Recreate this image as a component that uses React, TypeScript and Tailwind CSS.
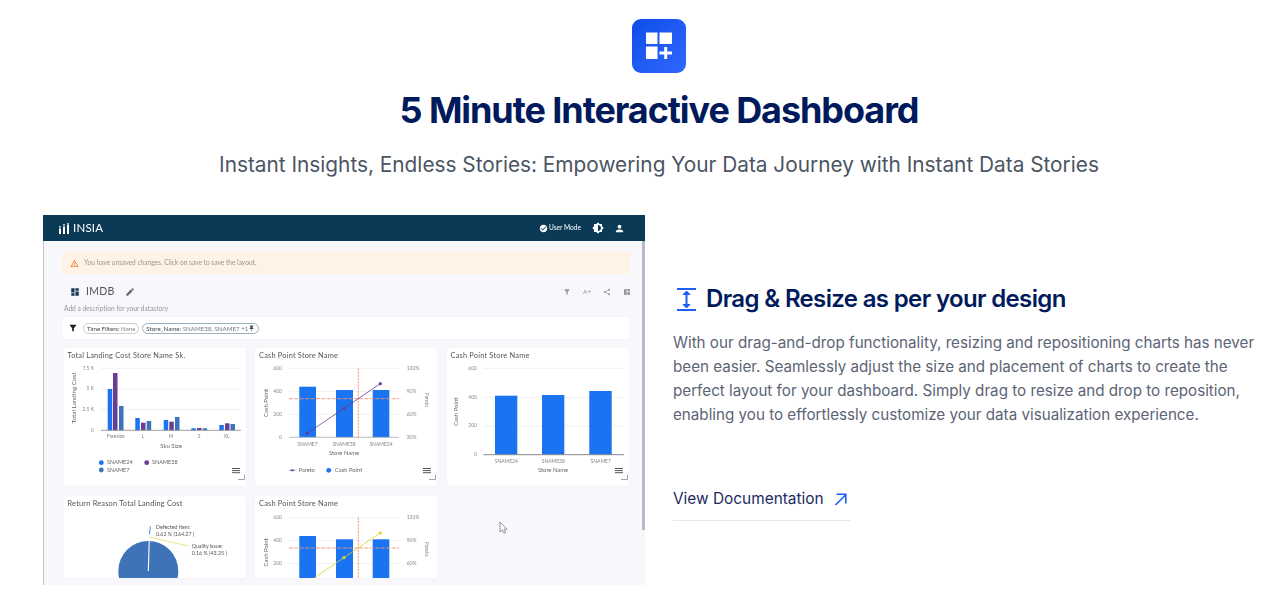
import type { ReactNode } from "react";
import { MdBrightnessMedium, MdCheckCircle, MdDashboard, MdEdit, MdFilterAlt, MdPerson, MdPushPin, MdShare, MdSpaceDashboard, MdWarningAmber } from "react-icons/md";

const BLUE = "#1a73f0";
const PURPLE = "#6a3d94";
const STEEL = "#3f73b8";

function Corner({ x = 174 }: { x?: number }) {
  return (
    <g>
      <path d={`M${x} 131.5H${x + 6.5}V126.5`} fill="none" stroke="#9a9a9a" strokeWidth="0.9" />
      <path d={`M${x - 6} 120.5h8M${x - 6} 122.6h8M${x - 6} 124.7h8`} stroke="#444" strokeWidth="0.9" />
    </g>
  );
}

function T({ x, y, children, a = "middle", s = 5, f = "#888", w = 400, r }: { x: number; y: number; children: ReactNode; a?: "start" | "middle" | "end"; s?: number; f?: string; w?: number; r?: number }) {
  return (
    <text x={x} y={y} textAnchor={a} fontSize={s} fill={f} fontWeight={w} dominantBaseline="middle" transform={r !== undefined ? `rotate(${r} ${x} ${y})` : undefined}>
      {children}
    </text>
  );
}

function Card({ title, tall, children }: { title: string; tall?: boolean; children: ReactNode }) {
  return (
    <div className={`bg-white rounded-[2px] overflow-hidden shadow-[0_0_3px_rgba(0,0,0,0.04)] ${tall ? "h-[138px]" : "h-[82px]"}`}>
      <div className="h-[16px] pl-[4px] pt-[3px] text-[7.4px] leading-[10px] text-[#555] tracking-[0.2px] whitespace-nowrap">{title}</div>
      <svg width="182" height={tall ? 122 : 66} viewBox={tall ? "0 16 182 122" : "0 16 182 66"} className="block">
        {children}
      </svg>
    </div>
  );
}

function Bars() {
  const groups: [number, number, string][][] = [
    [[43.7, 41, BLUE], [49, 25, PURPLE], [55, 58, STEEL]],
    [[71.3, 70, BLUE], [77, 74.7, PURPLE], [82.7, 73, STEEL]],
    [[99.7, 72, BLUE], [105.3, 73.7, PURPLE], [111, 69, STEEL]],
    [[127.3, 80.3, BLUE], [133, 80, PURPLE], [138.7, 80.3, STEEL]],
    [[155.3, 77, BLUE], [161, 75.3, PURPLE], [166.5, 76, STEEL]],
  ];
  return (
    <g>
      {[20.3, 41, 61.3].map((y) => (
        <line key={y} x1="37" x2="177" y1={y} y2={y} stroke="#ececec" strokeWidth="0.8" />
      ))}
      {groups.flat().map(([x, y, c]) => (
        <rect key={`${x}`} x={x} y={y} width="4.5" height={82.3 - y} fill={c} />
      ))}
      <line x1="37" x2="177" y1="82.3" y2="82.3" stroke="#888" strokeWidth="0.8" />
      <T x={30} y={20.3} a="end">7.5 K</T>
      <T x={30} y={41} a="end">5 K</T>
      <T x={30} y={61.3} a="end">2.5 K</T>
      <T x={30} y={82.3} a="end">0</T>
      <T x={51.7} y={89}>Freesize</T>
      <T x={79} y={89}>L</T>
      <T x={107} y={89}>M</T>
      <T x={135} y={89}>S</T>
      <T x={162.7} y={89}>XL</T>
      <T x={107} y={98.5} s={6} f="#666">Sku Size</T>
      <T x={10.3} y={50} s={6.3} f="#666" r={-90}>Total Landing Cost</T>
      <circle cx="37.3" cy="114.7" r="2.4" fill={BLUE} />
      <T x={43} y={115} a="start" s={5.5} f="#666">SNAME24</T>
      <circle cx="82.7" cy="114.7" r="2.4" fill={PURPLE} />
      <T x={88} y={115} a="start" s={5.5} f="#666">SNAME38</T>
      <circle cx="37.3" cy="122" r="2.4" fill={STEEL} />
      <T x={43} y={122.3} a="start" s={5.5} f="#666">SNAME7</T>
      <Corner />
    </g>
  );
}

function Pareto({ line, dy = 0, cut }: { line: string; dy?: number; cut?: boolean }) {
  const p: [number, number][] = [[52.3, 85.3 + dy], [89, 60.3 + dy], [125.3, 35.7 + dy]];
  return (
    <g>
      {[20.3, 43.3, 66.3].map((y) => (
        <line key={y} x1="34" x2="144" y1={y + dy} y2={y + dy} stroke="#ececec" strokeWidth="0.8" />
      ))}
      <rect x="44.3" y={38.7 + dy} width="16.7" height={50.6} fill={BLUE} />
      <rect x="81" y={42 + dy} width="17" height={47.3} fill={BLUE} />
      <rect x="117.7" y={42 + dy} width="16.6" height={47.3} fill={BLUE} />
      <line x1="34" x2="144" y1={89.3 + dy} y2={89.3 + dy} stroke="#aaa" strokeWidth="0.8" />
      <line x1="34" x2="144" y1={50.7 + dy} y2={50.7 + dy} stroke="#f2937a" strokeWidth="0.9" strokeDasharray="4 1.4" />
      <line x1="103.3" x2="103.3" y1={20.3 + dy} y2={89.3 + dy} stroke="#f2734f" strokeWidth="0.7" strokeDasharray="2.4 0.8" />
      <polyline points={p.map((q) => q.join(",")).join(" ")} fill="none" stroke={line} strokeWidth="0.8" />
      {p.map(([x, y]) => (
        <circle key={x} cx={x} cy={y} r="1.6" fill={line} />
      ))}
      <T x={27} y={20.3 + dy} a="end">600</T>
      <T x={27} y={43.3 + dy} a="end">400</T>
      <T x={27} y={66.3 + dy} a="end">200</T>
      <T x={151.7} y={20.3 + dy} a="start">120%</T>
      <T x={151.7} y={43.3 + dy} a="start">90%</T>
      <T x={151.7} y={66.3 + dy} a="start">60%</T>
      <T x={171.7} y={52 + dy} r={90}>Pareto</T>
      <T x={11} y={55 + dy} s={6} f="#666" r={-90}>Cash Point</T>
      {!cut && (
        <g>
          <T x={27} y={89.3} a="end">0</T>
          <T x={151.7} y={89.3} a="start">30%</T>
          <T x={52.5} y={96.3}>SNAME7</T>
          <T x={89} y={96.3}>SNAME38</T>
          <T x={126} y={96.3}>SNAME24</T>
          <T x={89} y={105.3} s={5.8} f="#666">Store Name</T>
          <line x1="34.3" x2="40.3" y1="122.3" y2="122.3" stroke={line} strokeWidth="0.8" />
          <circle cx="37.3" cy="122.3" r="1.1" fill={line} />
          <T x={43.7} y={122.5} a="start" s={5.6} f="#666">Pareto</T>
          <circle cx="73.7" cy="122.3" r="2.4" fill={BLUE} />
          <T x={80} y={122.5} a="start" s={5.8} f="#666">Cash Point</T>
          <Corner />
        </g>
      )}
    </g>
  );
}

function Simple() {
  return (
    <g>
      {[20.3, 49.3, 78].map((y) => (
        <line key={y} x1="36.3" x2="177" y1={y} y2={y} stroke="#ececec" strokeWidth="0.8" />
      ))}
      <rect x="48" y="47.7" width="22.3" height="59" fill={BLUE} />
      <rect x="95" y="47" width="22.3" height="59.7" fill={BLUE} />
      <rect x="142.3" y="43" width="22.4" height="63.7" fill={BLUE} />
      <line x1="36.3" x2="177" y1="106.7" y2="106.7" stroke="#888" strokeWidth="1" />
      <T x={30} y={20.3} a="end">600</T>
      <T x={30} y={49.3} a="end">400</T>
      <T x={30} y={78} a="end">200</T>
      <T x={30} y={106.7} a="end">0</T>
      <T x={59.3} y={113.7}>SNAME24</T>
      <T x={106.3} y={113.7}>SNAME38</T>
      <T x={153.7} y={113.7}>SNAME7</T>
      <T x={106} y={123} s={5.8} f="#666">Store Name</T>
      <T x={9.7} y={63.7} s={6} f="#666" r={-90}>Cash Point</T>
      <Corner />
    </g>
  );
}

function Pie() {
  return (
    <g>
      <circle cx="84.3" cy="75" r="30" fill={STEEL} />
      <path d="M84.3 75L85.3 44" stroke="#fff" strokeWidth="1.1" />
      <path d="M85.4 38.5L86.4 30.5" stroke={BLUE} strokeWidth="0.8" />
      <path d="M85.3 41L124.3 50" stroke="#e2d95a" strokeWidth="0.7" fill="none" />
      <T x={92} y={31.7} a="start" s={5.3} f="#555">Defected item:</T>
      <T x={92} y={38.5} a="start" s={5.3} f="#555">0.62 % (164.27 )</T>
      <T x={127.7} y={51} a="start" s={5.3} f="#555">Quality issue:</T>
      <T x={127.7} y={57.5} a="start" s={5.3} f="#555">0.16 % (43.25 )</T>
    </g>
  );
}

function Shot() {
  return (
    <div className="relative w-[602px] h-[370px] shrink-0 overflow-hidden flex flex-col blur-[0.4px] font-['Lato',sans-serif]">
      <div className="h-[26px] shrink-0 bg-[#0b3a56] flex items-center pl-[16px] text-white">
        <svg width="11" height="11" viewBox="0 0 11 11" className="mr-[3px]">
          <rect x="0" y="5.5" width="2" height="5.5" fill="#fff" />
          <circle cx="1" cy="3.8" r="0.9" fill="#fff" />
          <rect x="4" y="3.5" width="2" height="7.5" fill="#fff" />
          <circle cx="5" cy="1.8" r="0.9" fill="#fff" />
          <rect x="8" y="2" width="2" height="9" fill="#fff" />
          <circle cx="9" cy="0.9" r="0.9" fill="#fff" />
        </svg>
        <span className="text-[11.5px] leading-none tracking-[0.2px]">INSIA</span>
        <div className="ml-auto flex items-center">
          <MdCheckCircle size={9} />
          <span className="text-[6.6px] ml-[1px] w-[40px]">User Mode</span>
          <MdBrightnessMedium size={12} className="ml-[3px]" />
          <MdPerson size={11} className="ml-[10px] mr-[20px]" />
        </div>
      </div>
      <div className="flex-1 min-h-0 bg-[#f7f7fc] border-l border-[#c4c4d0] pl-[18px] pt-[11px] overflow-hidden">
        <div className="w-[568px] h-[22px] bg-[#fff3e5] rounded-[2px] flex items-center pl-[8px] text-[6.6px] text-[#a09585]">
          <MdWarningAmber size={9} className="text-[#ed7b2f] mr-[5px]" />
          <span>You have unsaved changes. Click on save to save the layout.</span>
        </div>
        <div className="w-[568px] h-[16px] mt-[10px] flex items-center pl-[8px] text-[#333]">
          <MdDashboard size={10} className="text-[#16384f]" />
          <span className="ml-[6px] text-[10.5px] tracking-[0.3px] text-[#555]">IMDB</span>
          <MdEdit size={10} className="ml-[10px] text-[#666]" />
          <div className="ml-auto flex items-center text-[#999]">
            <MdFilterAlt size={8} />
            <span className="text-[6.5px] ml-[12.5px] w-[8px] text-center whitespace-nowrap">A+</span>
            <MdShare size={8} className="ml-[12px]" />
            <MdSpaceDashboard size={8} className="ml-[12px] mr-[-1px]" />
          </div>
        </div>
        <div className="h-[8px] mt-[4px] pl-[2px] text-[6.6px] leading-[8px] text-[#999]">Add a description for your datastory</div>
        <div className="w-[567px] h-[22px] mt-[5px] bg-white rounded-[2px] flex items-center pl-[6px] shadow-[0_0_2px_rgba(0,0,0,0.04)]">
          <MdFilterAlt size={10} className="text-[#222]" />
          <span className="ml-[5px] h-[11px] px-[3px] border border-[#ccc] rounded-full text-[6px] leading-[9px] text-[#444] whitespace-nowrap">
            Time Filters: <span className="text-[#888]">None</span>
          </span>
          <span className="ml-[3px] h-[11px] px-[3px] border border-[#9db0c0] rounded-full text-[6.2px] leading-[9px] text-[#444] whitespace-nowrap flex items-center">
            Store_Name:&nbsp;<span className="text-[#778]">SNAME38, SNAME7 +1</span>
            <MdPushPin size={7} className="text-[#446]" />
          </span>
        </div>
        <div className="grid grid-cols-[182px_182px_182px] gap-x-[9.5px] gap-y-[10px] mt-[9px] ml-[1.5px]">
          <Card title="Total Landing Cost Store Name Sk." tall><Bars /></Card>
          <Card title="Cash Point Store Name" tall><Pareto line={PURPLE} /></Card>
          <Card title="Cash Point Store Name" tall><Simple /></Card>
          <Card title="Return Reason Total Landing Cost"><Pie /></Card>
          <Card title="Cash Point Store Name"><Pareto line="#dcd32a" dy={1.3} cut /></Card>
        </div>
      </div>
      <div className="absolute right-0 top-[26px] w-[3.5px] h-[289px] bg-[#b9b9cb]" />
      <svg width="9" height="13" viewBox="0 0 9 13" className="absolute left-[456px] top-[306px]">
        <path d="M1 1V11L3.4 8.8L5 12.2L6.6 11.4L5 8.2H8Z" fill="#fff" stroke="#666" strokeWidth="0.7" />
      </svg>
    </div>
  );
}

export default function App() {
  return (
    <div className="w-full h-[607px] overflow-hidden bg-white font-['Inter',sans-serif]">
      <div className="flex flex-col items-center pt-[19px] pl-[35px]">
        <div className="w-[54px] h-[54px] rounded-[9px] bg-gradient-to-br from-[#0a4de8] to-[#3068ff] flex items-center justify-center">
          <svg width="28" height="28" viewBox="0 0 28 28">
            <rect x="1" y="0.5" width="11.5" height="11.5" fill="#fff" />
            <rect x="14.5" y="0.5" width="12.5" height="11.5" fill="#fff" />
            <rect x="1" y="14.5" width="11.5" height="12.5" fill="#fff" />
            <path d="M20.7 15V27M14.5 21H27" stroke="#fff" strokeWidth="3" />
          </svg>
        </div>
        <h1 className="mt-[17px] text-[36px] leading-[40px] font-bold text-[#011a5c] tracking-[-1.08px]">5 Minute Interactive Dashboard</h1>
        <p className="mt-[21px] text-[20.8px] leading-[28px] text-[#4b5563]">Instant Insights, Endless Stories: Empowering Your Data Journey with Instant Data Stories</p>
      </div>
      <div className="flex mt-[36px] pl-[43px] gap-[28px]">
        <Shot />
        <div className="w-[590px] pt-[68px]">
          <div className="flex items-center h-[32px]">
            <svg width="24" height="24" viewBox="0 0 24 24" className="ml-[1px]" fill="none" stroke="#1d5ff0" strokeWidth="2">
              <path d="M3 2H22M3 23H22M12.5 5V20" />
              <path d="M9 7.5L12.5 4L16 7.5ZM9 17.5L12.5 21L16 17.5Z" fill="#1d5ff0" strokeWidth="1" strokeLinejoin="round" />
            </svg>
            <h2 className="ml-[8px] text-[24px] leading-[32px] font-semibold text-[#011a5c] tracking-[-0.65px]">Drag &amp; Resize as per your design</h2>
          </div>
          <p className="mt-[16px] text-[15.2px] leading-[24px] text-[#5c6475]">
            With our drag-and-drop functionality, resizing and repositioning charts has never been easier. Seamlessly adjust the size and placement of charts to create the perfect layout for your dashboard. Simply drag to resize and drop to reposition, enabling you to effortlessly customize your data visualization experience.
          </p>
          <a className="mt-[60px] w-[177px] pb-[9px] border-b border-[#e5e7eb] flex items-center text-[15.4px] leading-[24px] text-[#1c2b5e] whitespace-nowrap">
            View Documentation
            <svg width="13" height="13" viewBox="0 0 13 13" fill="none" stroke="#1d5ff0" strokeWidth="1.6" className="ml-[10px]">
              <path d="M1.5 12L12 1.5M2.5 1.2H11.8V10.5" />
            </svg>
          </a>
        </div>
      </div>
    </div>
  );
}
